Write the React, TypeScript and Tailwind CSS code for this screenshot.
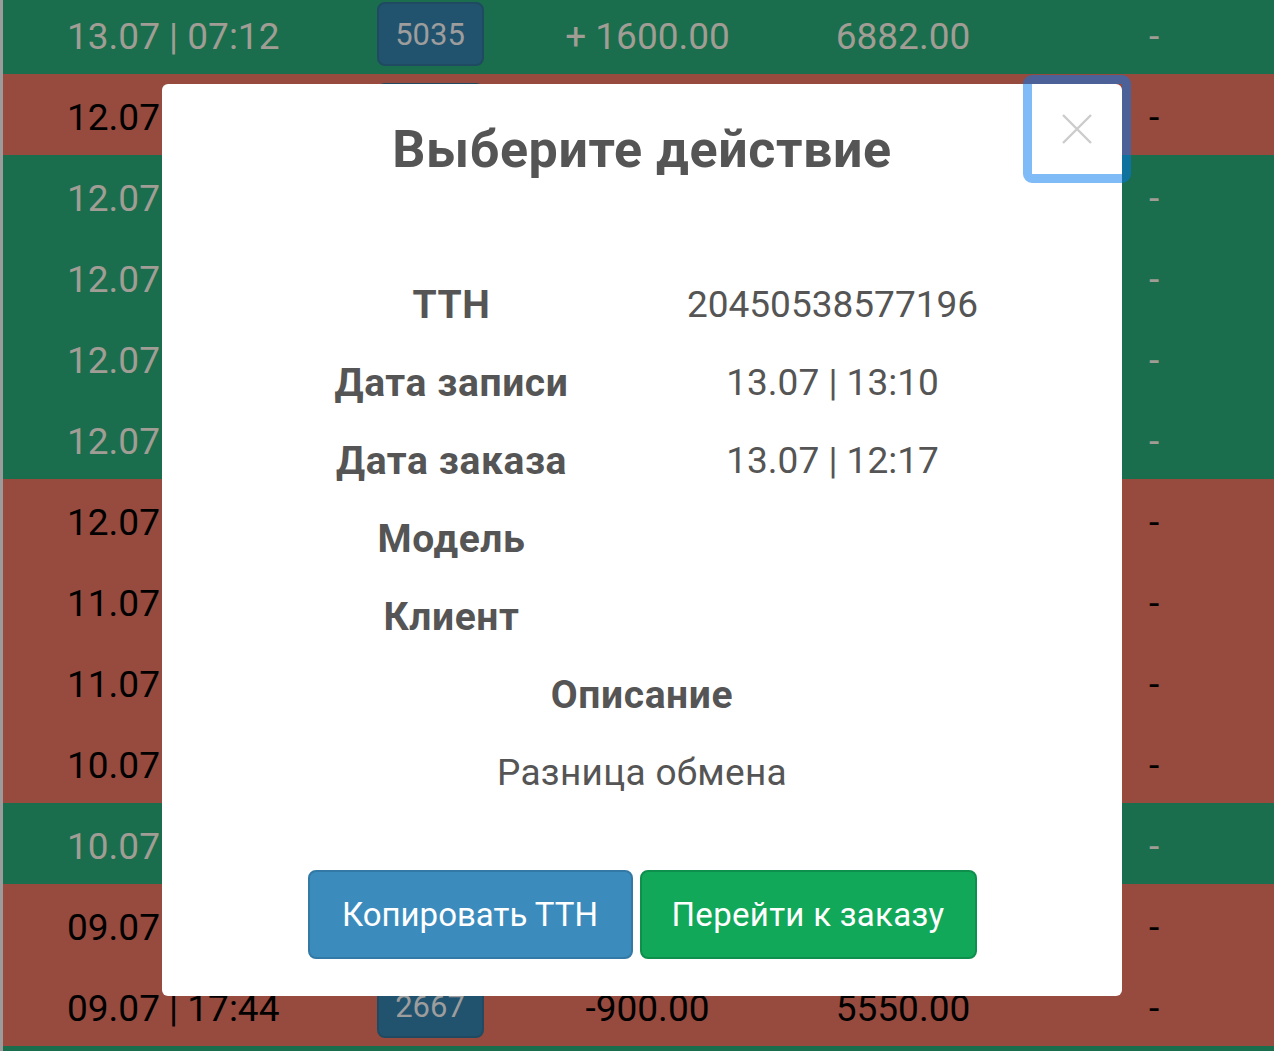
type Entry = {
  date: string;
  order: string;
  amount: string;
  balance: string;
  income: boolean;
};

const entries: Entry[] = [
  { date: "13.07 | 07:12", order: "5035", amount: "+ 1600.00", balance: "6882.00", income: true },
  { date: "12.07 | 19:40", order: "5021", amount: "-450.00", balance: "5282.00", income: false },
  { date: "12.07 | 17:05", order: "5019", amount: "+ 700.00", balance: "5732.00", income: true },
  { date: "12.07 | 15:31", order: "5012", amount: "+ 350.00", balance: "5032.00", income: true },
  { date: "12.07 | 13:18", order: "5008", amount: "+ 900.00", balance: "4682.00", income: true },
  { date: "12.07 | 11:02", order: "5003", amount: "+ 1200.00", balance: "3782.00", income: true },
  { date: "12.07 | 09:47", order: "4998", amount: "-300.00", balance: "2582.00", income: false },
  { date: "11.07 | 18:22", order: "4987", amount: "-1500.00", balance: "2882.00", income: false },
  { date: "11.07 | 12:10", order: "4975", amount: "-620.00", balance: "4382.00", income: false },
  { date: "10.07 | 16:55", order: "4960", amount: "-548.00", balance: "5002.00", income: false },
  { date: "10.07 | 10:33", order: "4951", amount: "+ 800.00", balance: "5550.00", income: true },
  { date: "09.07 | 19:08", order: "2671", amount: "-100.00", balance: "4750.00", income: false },
  { date: "09.07 | 17:44", order: "2667", amount: "-900.00", balance: "5550.00", income: false },
  { date: "09.07 | 14:20", order: "2660", amount: "+ 1000.00", balance: "6450.00", income: true },
];

function LedgerRow({ entry }: { entry: Entry }) {
  const tone = entry.income ? "bg-[#1a6e4d] text-[#a19d95]" : "bg-[#974a3e] text-black";
  return (
    <div className={`flex h-[81px] shrink-0 items-center text-[37px] leading-none ${tone}`}>
      <div className="w-[327px] whitespace-nowrap pl-[64px] pt-1.5">{entry.date}</div>
      <div className="flex w-[200px] justify-center">
        <span className="flex h-[64px] w-[107px] items-center justify-center rounded-lg border-2 border-[#1f4a62] bg-[#22536e] pt-0.5 text-[31px] text-[#9d9d9d]">
          {entry.order}
        </span>
      </div>
      <div className="w-[235px] whitespace-nowrap pt-1.5 text-center">{entry.amount}</div>
      <div className="w-[276px] pt-1.5 text-center">{entry.balance}</div>
      <div className="w-[226px] pt-1.5 text-center">-</div>
    </div>
  );
}

function ActionModal() {
  const details = [
    ["ТТН", "20450538577196"],
    ["Дата записи", "13.07 | 13:10"],
    ["Дата заказа", "13.07 | 12:17"],
    ["Модель", ""],
    ["Клиент", ""],
  ];

  return (
    <div className="fixed inset-0">
      <div className="relative ml-[162px] mt-[84px] w-[960px] rounded-md bg-white pb-[37px] pt-[36px] text-[#555]">
        <button className="absolute right-0 top-0 flex h-[90px] w-[90px] items-center justify-center">
          <span className="absolute -inset-[9px] rounded-[9px] border-[9px] border-[rgba(0,120,240,0.5)]" />
          <svg width="30" height="30" viewBox="0 0 30 30" fill="none" stroke="#cccccc" strokeWidth="2.4">
            <path d="M1 1 L29 29 M29 1 L1 29" />
          </svg>
        </button>

        <h2 className="h-[60px] text-center text-[52px] font-bold leading-[60px] tracking-[0.6px]">Выберите действие</h2>

        <div className="mx-auto mt-[86px] grid w-[762px] grid-cols-2 text-[37px] leading-[78px]">
          {details.map(([label, value]) => (
            <div key={label} className="contents">
              <div className="h-[78px] text-center text-[39px] font-bold tracking-[0.6px]">{label}</div>
              <div className="h-[78px] text-center">{value}</div>
            </div>
          ))}
          <div className="col-span-2 h-[78px] text-center text-[39px] font-bold tracking-[0.6px]">Описание</div>
          <div className="col-span-2 h-[78px] text-center tracking-[0.3px]">Разница обмена</div>
        </div>

        <div className="mt-[58px] flex justify-center gap-[7px] text-[33px] text-white">
          <button className="h-[89px] w-[325px] rounded-lg border-2 border-[#3279a6] bg-[#3b8cbc]">Копировать ТТН</button>
          <button className="h-[89px] w-[337px] rounded-lg border-2 border-[#0e8f4b] bg-[#12a85a] tracking-[0.3px]">
            Перейти к заказу
          </button>
        </div>
      </div>
    </div>
  );
}

export default function App() {
  return (
    <div className="h-screen overflow-hidden border-l-[3px] border-[#9b9b9b] bg-[#1a6e4d] font-['Roboto','Noto_Sans',sans-serif]">
      <div className="-mt-[7px] flex flex-col">
        {entries.map((entry) => (
          <LedgerRow key={entry.order} entry={entry} />
        ))}
      </div>
      <ActionModal />
    </div>
  );
}
